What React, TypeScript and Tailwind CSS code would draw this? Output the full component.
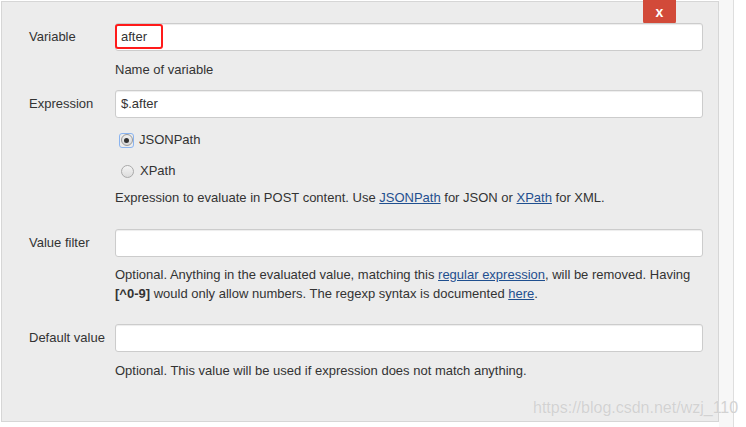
import React from "react";

const font = { fontFamily: '"Liberation Sans", Arial, sans-serif' };

function Input({ value, highlight }: { value?: string; highlight?: boolean }) {
  return (
    <div className="relative flex-1 h-[28px] bg-white border border-[#cccccc] rounded-[3px] shadow-[inset_0_1px_1px_rgba(0,0,0,0.075)] flex items-center">
      {value !== undefined && (
        <span className="pl-[5px] text-[13px] text-[#333]">{value}</span>
      )}
      {highlight && (
        <div className="absolute left-[-1px] top-0 w-[48px] h-[25px] border-2 border-[#ff1a1a] rounded-[3px]" />
      )}
    </div>
  );
}

function Row({ label, children }: { label: string; children: React.ReactNode }) {
  return (
    <div className="flex items-center">
      <div className="w-[86px] text-[13px] text-[#333]">{label}</div>
      {children}
    </div>
  );
}

function Link({ children }: { children: React.ReactNode }) {
  return <span className="text-[#1f4f8f] underline">{children}</span>;
}

export default function App() {
  return (
    <div className="w-[746px] h-[427px] bg-white flex overflow-hidden relative" style={font}>
      <div className="mt-[1px] ml-[1px] w-[718px] h-[421px] border border-[#d6d6d6] bg-[#ececec] relative pt-[21px] pl-[27px] pr-[15px] text-[13px] text-[#333] leading-[18px]">
        <div className="absolute left-[641px] top-[-2px] w-[33px] h-[24px] bg-[#d24a39] rounded-b-[3px] flex items-center justify-center text-white font-bold text-[14px]">
          x
        </div>
        <Row label="Variable">
          <Input value="after" highlight />
        </Row>
        <div className="ml-[86px] mt-[10px]">Name of variable</div>
        <div className="mt-[11px]">
          <Row label="Expression">
            <Input value="$.after" />
          </Row>
        </div>
        <div className="ml-[91px] mt-[13px] flex items-center h-[18px]">
          <div className="w-[15px] h-[15px] rounded-[3px] border border-[#8ab4f0] flex items-center justify-center -ml-[1px]">
            <div className="w-[12px] h-[12px] rounded-full border border-[#9a9a9a] bg-gradient-to-b from-[#f0f0f0] to-[#d8d8d8] flex items-center justify-center">
              <div className="w-[5px] h-[5px] rounded-full bg-[#333]" />
            </div>
          </div>
          <span className="ml-[5px]">JSONPath</span>
        </div>
        <div className="ml-[92px] mt-[13px] flex items-center h-[18px]">
          <div className="w-[13px] h-[13px] rounded-full border border-[#a9a9a9] bg-gradient-to-b from-[#f4f4f4] to-[#dcdcdc]" />
          <span className="ml-[6px]">XPath</span>
        </div>
        <div className="ml-[86px] mt-[9px]">
          Expression to evaluate in POST content. Use <Link>JSONPath</Link> for JSON or <Link>XPath</Link> for XML.
        </div>
        <div className="mt-[22px]">
          <Row label="Value filter">
            <Input />
          </Row>
        </div>
        <div className="ml-[86px] mt-[8px] leading-[19px] pr-[10px]">
          Optional. Anything in the evaluated value, matching this <Link>regular expression</Link>, will be removed. Having{" "}
          <b>[^0-9]</b> would only allow numbers. The regexp syntax is documented <Link>here</Link>.
        </div>
        <div className="mt-[21px]">
          <Row label="Default value">
            <Input />
          </Row>
        </div>
        <div className="ml-[86px] mt-[10px]">
          Optional. This value will be used if expression does not match anything.
        </div>
      </div>
      <div className="w-[15px] h-full bg-[#f7f7f7] border-r border-[#dedede]" />
      <div className="absolute left-[533px] top-[399px] text-[16px] leading-[18px] whitespace-nowrap text-[#d2d2d2]" style={{ textShadow: "0 0 1px rgba(255,255,255,0.6)" }}>
        https://blog.csdn.net/wzj_110
      </div>
    </div>
  );
}
